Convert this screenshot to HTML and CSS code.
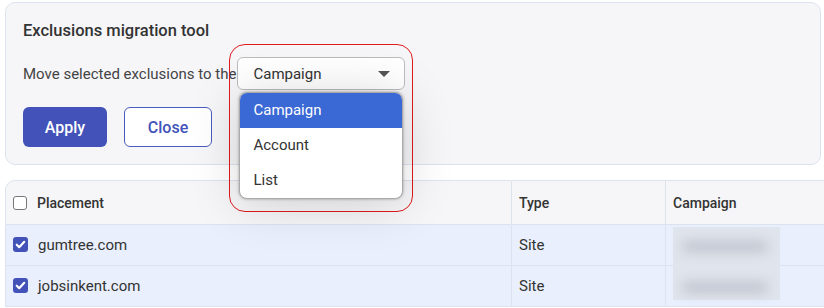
FILE: index.html
```html
<!DOCTYPE html>
<html lang="en">
  <head>
    <meta charset="UTF-8" />
    <meta name="viewport" content="width=device-width, initial-scale=1.0" />
    <title>Exclusions migration tool</title>
    <link rel="stylesheet" href="styles.css">
  </head>

  <body>
    <div class="tool-panel">
      <h2>Exclusions migration tool</h2>
      <div class="move-row">
        <span class="move-label">Move selected exclusions to the</span>
        <div class="select-wrap">
          <div class="select-box">
            <span>Campaign</span>
            <span class="caret"></span>
          </div>
          <div class="highlight-ring"></div>
          <ul class="select-menu">
            <li class="active">Campaign</li>
            <li>Account</li>
            <li>List</li>
          </ul>
        </div>
      </div>
      <div class="actions">
        <button class="btn-apply">Apply</button>
        <button class="btn-close">Close</button>
      </div>
    </div>

    <table class="exclusions">
      <thead>
        <tr>
          <th class="col-placement"><span class="check"></span>Placement</th>
          <th class="col-type">Type</th>
          <th class="col-campaign">Campaign</th>
        </tr>
      </thead>
      <tbody>
        <tr>
          <td><span class="check checked"><svg viewBox="0 0 14 14"><path d="M3.5 7.2l2.3 2.3 4.7-5" /></svg></span>gumtree.com</td>
          <td>Site</td>
          <td class="cell-hidden">
            <!-- campaign names are blurred out over both rows -->
            <div class="blur-anchor"><span class="blurred"></span></div>
          </td>
        </tr>
        <tr>
          <td><span class="check checked"><svg viewBox="0 0 14 14"><path d="M3.5 7.2l2.3 2.3 4.7-5" /></svg></span>jobsinkent.com</td>
          <td>Site</td>
          <td class="cell-hidden"></td>
        </tr>
      </tbody>
    </table>
  </body>
</html>
```

FILE: styles.css
```css
* {
  box-sizing: border-box;
}

body {
  font-family: Roboto, "Liberation Sans", sans-serif;
  background-color: #ffffff;
  margin: 0;
  padding: 2px 0 0 5px;
  color: #333;
  overflow: hidden;
}

.tool-panel {
  background-color: #f6f6f9;
  border: 1px solid #dde3ee;
  border-radius: 10px;
  width: 816px;
  height: 163px;
  padding: 17px 8px 16px 17px;
  position: relative;
  z-index: 2;
}

.tool-panel h2 {
  margin: 0;
  font-size: 16.5px;
  font-weight: 500;
  color: #333;
  line-height: 22px;
}

.move-row {
  display: flex;
  align-items: center;
  margin-top: 15px;
}

.move-label {
  font-size: 15px;
  color: #444;
  white-space: nowrap;
}

.select-wrap {
  position: relative;
  margin-left: 1px;
}

.select-box {
  width: 168px;
  height: 33px;
  border: 1px solid #bcbcbc;
  border-radius: 6px;
  background-color: #fff;
  display: flex;
  align-items: center;
  justify-content: space-between;
  padding: 0 14px 0 15px;
  font-size: 15px;
  color: #333;
}

.caret {
  width: 0;
  height: 0;
  border-left: 6px solid transparent;
  border-right: 6px solid transparent;
  border-top: 6px solid #555;
}

.select-menu {
  position: absolute;
  left: 2px;
  top: 35px;
  width: 164px;
  margin: 0;
  padding: 0;
  list-style: none;
  background-color: #fff;
  border: 1px solid #aaa;
  border-radius: 8px;
  overflow: hidden;
  box-shadow: 0 0 3px rgba(0, 0, 0, 0.35), 0 4px 50px rgba(0, 0, 0, 0.17);
  z-index: 5;
}

.select-menu li {
  height: 35px;
  line-height: 35px;
  padding-left: 13px;
  font-size: 15px;
  color: #333;
}

.select-menu li.active {
  background-color: #3a68d4;
  color: #fff;
}

.highlight-ring {
  position: absolute;
  left: -8px;
  top: -13px;
  width: 184px;
  height: 168px;
  border: 1.5px solid #e01b1b;
  border-radius: 16px;
  z-index: 4;
}

.actions {
  display: flex;
  gap: 17px;
  margin-top: 17px;
}

.actions button {
  height: 40px;
  border-radius: 6px;
  font-family: Roboto, "Liberation Sans", sans-serif;
  font-size: 16px;
  font-weight: 500;
  cursor: pointer;
}

.btn-apply {
  width: 84px;
  background-color: #4252b9;
  color: #fff;
  border: none;
}

.btn-close {
  width: 88px;
  background-color: #fff;
  color: #4252b9;
  border: 1px solid #4a5bbf;
}

.exclusions {
  margin-top: 15px;
  border-collapse: separate;
  border-spacing: 0;
  width: 830px;
  font-size: 14px;
  position: relative;
  z-index: 1;
}

.exclusions th,
.exclusions td {
  text-align: left;
  padding: 0 7px;
  border-right: 1px solid #dde3ee;
  border-bottom: 1px solid #dde3ee;
  color: #333;
}

.exclusions th {
  background-color: #f6f6f8;
  height: 45px;
  font-weight: 500;
  border-top: 1px solid #dde3ee;
}

.exclusions th:first-child {
  border-top-left-radius: 10px;
}

.exclusions th:first-child,
.exclusions td:first-child {
  border-left: 1px solid #dde3ee;
}

.exclusions td {
  background-color: #e9effc;
  height: 41px;
  font-size: 15px;
}

.col-placement {
  width: 507px;
}

.col-type {
  width: 154px;
}

.check {
  display: inline-block;
  width: 14px;
  height: 14px;
  border: 1px solid #777;
  border-radius: 3px;
  background-color: #fff;
  vertical-align: -2px;
  margin-right: 10px;
}

.check.checked {
  width: 15px;
  height: 15px;
  border: none;
  background-color: #4252b9;
}

.check svg {
  width: 15px;
  height: 15px;
  display: block;
}

.check path {
  fill: none;
  stroke: #fff;
  stroke-width: 2;
  stroke-linecap: round;
  stroke-linejoin: round;
}

.cell-hidden {
  padding-left: 4px;
  vertical-align: top;
}

.blur-anchor {
  position: relative;
  height: 0;
}

.blurred {
  position: absolute;
  left: 0;
  top: 2px;
  width: 107px;
  height: 73px;
  background-color: #e0e4ec;
  z-index: 2;
}

.blurred::before,
.blurred::after {
  content: "";
  position: absolute;
  left: 10px;
  width: 84px;
  height: 11px;
  background-color: #bfc4cf;
  filter: blur(6px);
}

.blurred::before {
  top: 14px;
}

.blurred::after {
  top: 55px;
}
```
